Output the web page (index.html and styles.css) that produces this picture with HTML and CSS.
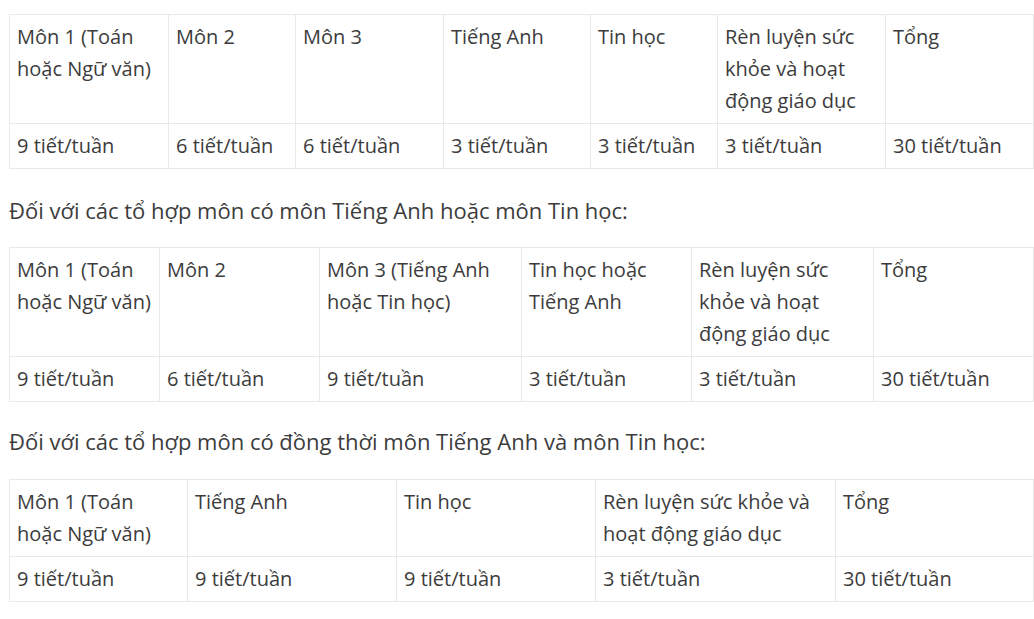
FILE: index.html
```html
<!DOCTYPE html>
<html lang="vi">
<head>
<meta charset="utf-8">
<link rel="stylesheet" href="styles.css">
</head>
<body>
<div class="page">
  <table class="grid">
    <colgroup>
      <col class="w159"><col class="w127"><col class="w148"><col class="w147"><col class="w127"><col class="w168"><col>
    </colgroup>
    <tr>
      <td>Môn 1 (Toán hoặc Ngữ văn)</td>
      <td>Môn 2</td>
      <td>Môn 3</td>
      <td>Tiếng Anh</td>
      <td>Tin học</td>
      <td>Rèn luyện sức khỏe và hoạt động giáo dục</td>
      <td>Tổng</td>
    </tr>
    <tr>
      <td>9 tiết/tuần</td>
      <td>6 tiết/tuần</td>
      <td>6 tiết/tuần</td>
      <td>3 tiết/tuần</td>
      <td>3 tiết/tuần</td>
      <td>3 tiết/tuần</td>
      <td>30 tiết/tuần</td>
    </tr>
  </table>

  <p class="lead">Đối với các tổ hợp môn có môn Tiếng Anh hoặc môn Tin học:</p>

  <table class="grid">
    <colgroup>
      <col class="w150"><col class="w160"><col class="w202"><col class="w170"><col class="w182"><col>
    </colgroup>
    <tr>
      <td>Môn 1 (Toán hoặc Ngữ văn)</td>
      <td>Môn 2</td>
      <td>Môn 3 (Tiếng Anh hoặc Tin học)</td>
      <td>Tin học hoặc Tiếng Anh</td>
      <td>Rèn luyện sức khỏe và hoạt động giáo dục</td>
      <td>Tổng</td>
    </tr>
    <tr>
      <td>9 tiết/tuần</td>
      <td>6 tiết/tuần</td>
      <td>9 tiết/tuần</td>
      <td>3 tiết/tuần</td>
      <td>3 tiết/tuần</td>
      <td>30 tiết/tuần</td>
    </tr>
  </table>

  <p class="lead lead-2">Đối với các tổ hợp môn có đồng thời môn Tiếng Anh và môn Tin học:</p>

  <table class="grid">
    <colgroup>
      <col class="w178"><col class="w209"><col class="w199"><col class="w240"><col>
    </colgroup>
    <tr>
      <td>Môn 1 (Toán hoặc Ngữ văn)</td>
      <td>Tiếng Anh</td>
      <td>Tin học</td>
      <td>Rèn luyện sức khỏe và hoạt động giáo dục</td>
      <td>Tổng</td>
    </tr>
    <tr>
      <td>9 tiết/tuần</td>
      <td>9 tiết/tuần</td>
      <td>9 tiết/tuần</td>
      <td>3 tiết/tuần</td>
      <td>30 tiết/tuần</td>
    </tr>
  </table>
</div>
</body>
</html>
```

FILE: styles.css
```css
html, body {
  margin: 0;
  padding: 0;
  background: #ffffff;
}

body {
  font-family: "Open Sans", "Noto Sans", "Liberation Sans", sans-serif;
  font-size: 20px;
  line-height: 32px;
  color: #3c3c3c;
}

.page {
  padding: 14px 0 0 9px;
}

.grid {
  width: 1025px;
  border-collapse: collapse;
  table-layout: fixed;
}

.grid td {
  border: 1px solid #e9e9e9;
  padding: 6px 7px 6px 7px;
  vertical-align: top;
  text-align: left;
}

.w127 { width: 127px; }
.w147 { width: 147px; }
.w148 { width: 148px; }
.w150 { width: 150px; }
.w159 { width: 159px; }
.w160 { width: 160px; }
.w168 { width: 168px; }
.w170 { width: 170px; }
.w178 { width: 178px; }
.w182 { width: 182px; }
.w199 { width: 199px; }
.w202 { width: 202px; }
.w209 { width: 209px; }
.w240 { width: 240px; }

.lead {
  font-size: 22px;
  margin: 25px 0 21px 0;
}

.lead-2 {
  margin: 23px 0 22px 0;
}
```
